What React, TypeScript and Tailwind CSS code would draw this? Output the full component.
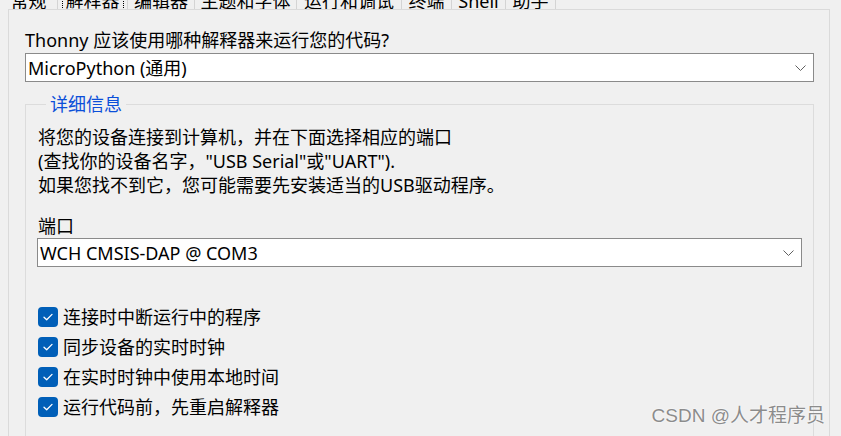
import React from "react";

const tabs = [
  { label: "常规", w: "w-[58px]" },
  { label: "解释器", w: "w-[70px]", active: true },
  { label: "编辑器", w: "w-[67px]" },
  { label: "主题和字体", w: "w-[102px]" },
  { label: "运行和调试", w: "w-[105px]" },
  { label: "终端", w: "w-[50px]" },
  { label: "Shell", w: "w-[54px]" },
  { label: "助手", w: "w-[50px]" },
];

const options = [
  "连接时中断运行中的程序",
  "同步设备的实时时钟",
  "在实时时钟中使用本地时间",
  "运行代码前，先重启解释器",
];

function Chevron() {
  return (
    <svg width="11" height="6" viewBox="0 0 11 6" fill="none" className="shrink-0">
      <path d="M0.5 0.5 L5.5 5.5 L10.5 0.5" stroke="#606060" strokeWidth="1" />
    </svg>
  );
}

function Combo({ value, className }: { value: string; className: string }) {
  return (
    <div className={`flex h-[29px] items-center justify-between border border-[#8a8a8a] bg-white pl-[2px] pr-[7px] ${className}`}>
      <span className="leading-[24px]">{value}</span>
      <Chevron />
    </div>
  );
}

function CheckRow({ label }: { label: string }) {
  return (
    <div className="flex h-[30px] items-center gap-[5px]">
      <span className="flex h-[20px] w-[20px] items-center justify-center rounded-[4px] bg-[#005fb8]">
        <svg width="20" height="20" viewBox="0 0 20 20" fill="none">
          <path d="M6 10.2 L8.7 12.8 L14 7.4" stroke="white" strokeWidth="1.3" strokeLinecap="round" strokeLinejoin="round" />
        </svg>
      </span>
      <span className="leading-[24px]">{label}</span>
    </div>
  );
}

export default function App() {
  return (
    <div className="relative h-[436px] w-[841px] overflow-hidden bg-[#f0f0f0] font-['Noto_Sans','Noto_Sans_CJK_SC',sans-serif] text-[18px] text-black">
      {/* Tab strip, cut off at the top */}
      <div className="flex h-[9px] items-end overflow-hidden">
        {tabs.map((t) => (
          <div key={t.label} className={`flex h-[30px] shrink-0 items-end justify-center border-r border-[#d4d4d4] ${t.w}`}>
            {t.active ? (
              <span className="-mb-[3px] border border-dotted border-black px-[3px] leading-[21px]">{t.label}</span>
            ) : (
              <span className="-mb-[3px] leading-[22px]">{t.label}</span>
            )}
          </div>
        ))}
      </div>

      <div className="ml-[8px] h-[427px] w-[822px] border-l border-r border-t border-[#dadada] pl-[16px] pt-[18px]">
        <div className="leading-[24px]">Thonny 应该使用哪种解释器来运行您的代码?</div>
        <Combo value="MicroPython (通用)" className="mt-px w-[789px]" />

        <fieldset className="mt-[10px] h-[400px] w-[789px] border border-[#dcdcdc] pl-[12px]">
          <legend className="ml-[8px] px-[4px] leading-[24px] text-[#0b4fd9]">详细信息</legend>
          <div className="pt-[9px] leading-[24px]">
            <div>将您的设备连接到计算机，并在下面选择相应的端口</div>
            <div>(查找你的设备名字，"USB Serial"或"UART").</div>
            <div>如果您找不到它，您可能需要先安装适当的USB驱动程序。</div>
          </div>
          <div className="mt-[17px] leading-[24px]">端口</div>
          <Combo value="WCH CMSIS-DAP @ COM3" className="-ml-px w-[765px]" />

          <div className="mt-[35px] flex flex-col">
            {options.map((o) => (
              <CheckRow key={o} label={o} />
            ))}
          </div>
        </fieldset>
      </div>

      {/* Watermark overlay */}
      <div className="absolute right-[16px] top-[404px] font-['Liberation_Sans','Noto_Sans_CJK_SC',sans-serif] text-[19px] leading-[23px] text-[#8c8c8c] [text-shadow:0_0_2px_#ffffff,0_0_1px_#ffffff]">
        CSDN @人才程序员
      </div>
    </div>
  );
}
